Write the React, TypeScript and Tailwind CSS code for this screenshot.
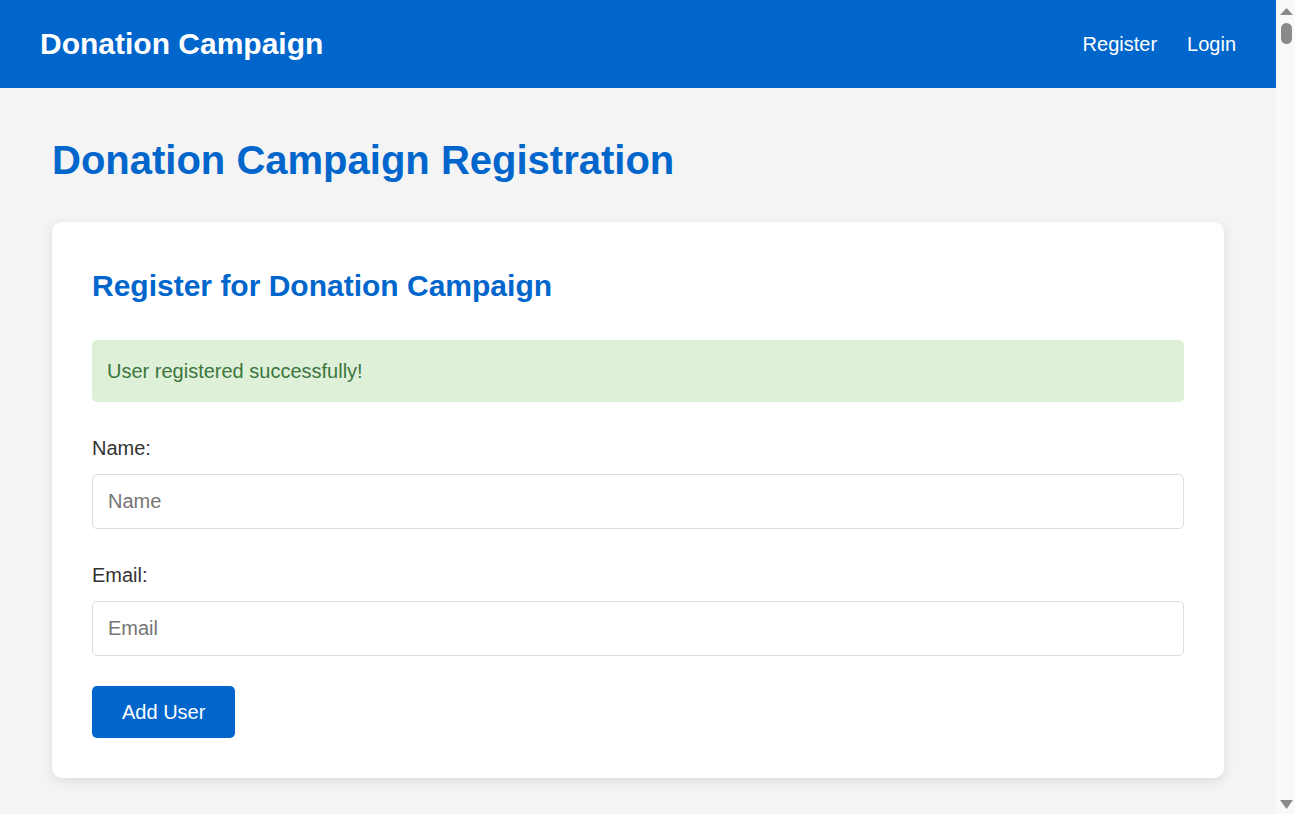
import { useState } from 'react';

function ScrollStrip() {
  return (
    <aside className="flex w-[19px] shrink-0 flex-col items-center bg-[#f9f9f9] pl-[1px]">
      <svg width="13" height="7" viewBox="0 0 13 7" className="mt-[8px]">
        <path d="M6.5 0 L13 7 L0 7 Z" fill="#8a8a8a" />
      </svg>
      <div className="mt-[8px] h-[21px] w-[11px] rounded-full bg-[#8a8a8a]" />
      <div className="flex-1" />
      <svg width="13" height="9" viewBox="0 0 13 9" className="mb-[5px]">
        <path d="M0 0 L13 0 L6.5 9 Z" fill="#8a8a8a" />
      </svg>
    </aside>
  );
}

export default function App() {
  const [name, setName] = useState('');
  const [email, setEmail] = useState('');

  return (
    <div className="flex h-screen overflow-hidden bg-[#f4f4f4] font-['Liberation_Sans',Arial,sans-serif] text-[20px] leading-[1.6] text-[#333]">
      <div className="min-w-0 flex-1">
        <header className="flex h-[88px] items-center justify-between bg-[#0066cc] px-[40px] text-white">
          <div className="text-[30px] font-bold">Donation Campaign</div>
          <nav className="flex items-center gap-[30px] text-[20px]">
            <a href="#" className="text-white">Register</a>
            <a href="#" className="text-white">Login</a>
          </nav>
        </header>

        <main className="px-[52px] pt-[40px]">
          <h1 className="mb-[30px] text-[40px] font-bold leading-[64px] text-[#0066cc]">
            Donation Campaign Registration
          </h1>

          <section className="rounded-[10px] bg-white p-[40px] shadow-[0_3px_12px_rgba(0,0,0,0.1)]">
            <h2 className="mb-[30px] text-[30px] font-bold leading-[48px] text-[#0066cc]">
              Register for Donation Campaign
            </h2>

            <div className="mb-[30px] rounded-[5px] bg-[#dff0d8] px-[15px] py-[15px] text-[#3c763d]">
              User registered successfully!
            </div>

            <form onSubmit={(e) => e.preventDefault()}>
              <div className="mb-[30px]">
                <label className="mb-[10px] block">Name:</label>
                <input
                  type="text"
                  placeholder="Name"
                  value={name}
                  onChange={(e) => setName(e.target.value)}
                  className="block h-[55px] w-full rounded-[5px] border border-[#ddd] px-[15px] text-[20px] text-[#333] placeholder:text-[#757575] outline-none"
                />
              </div>

              <div className="mb-[30px]">
                <label className="mb-[10px] block">Email:</label>
                <input
                  type="email"
                  placeholder="Email"
                  value={email}
                  onChange={(e) => setEmail(e.target.value)}
                  className="block h-[55px] w-full rounded-[5px] border border-[#ddd] px-[15px] text-[20px] text-[#333] placeholder:text-[#757575] outline-none"
                />
              </div>

              <button
                type="submit"
                className="rounded-[5px] bg-[#0066cc] px-[30px] py-[10px] text-[20px] leading-[32px] text-white"
              >
                Add User
              </button>
            </form>
          </section>
        </main>
      </div>
      <ScrollStrip />
    </div>
  );
}
